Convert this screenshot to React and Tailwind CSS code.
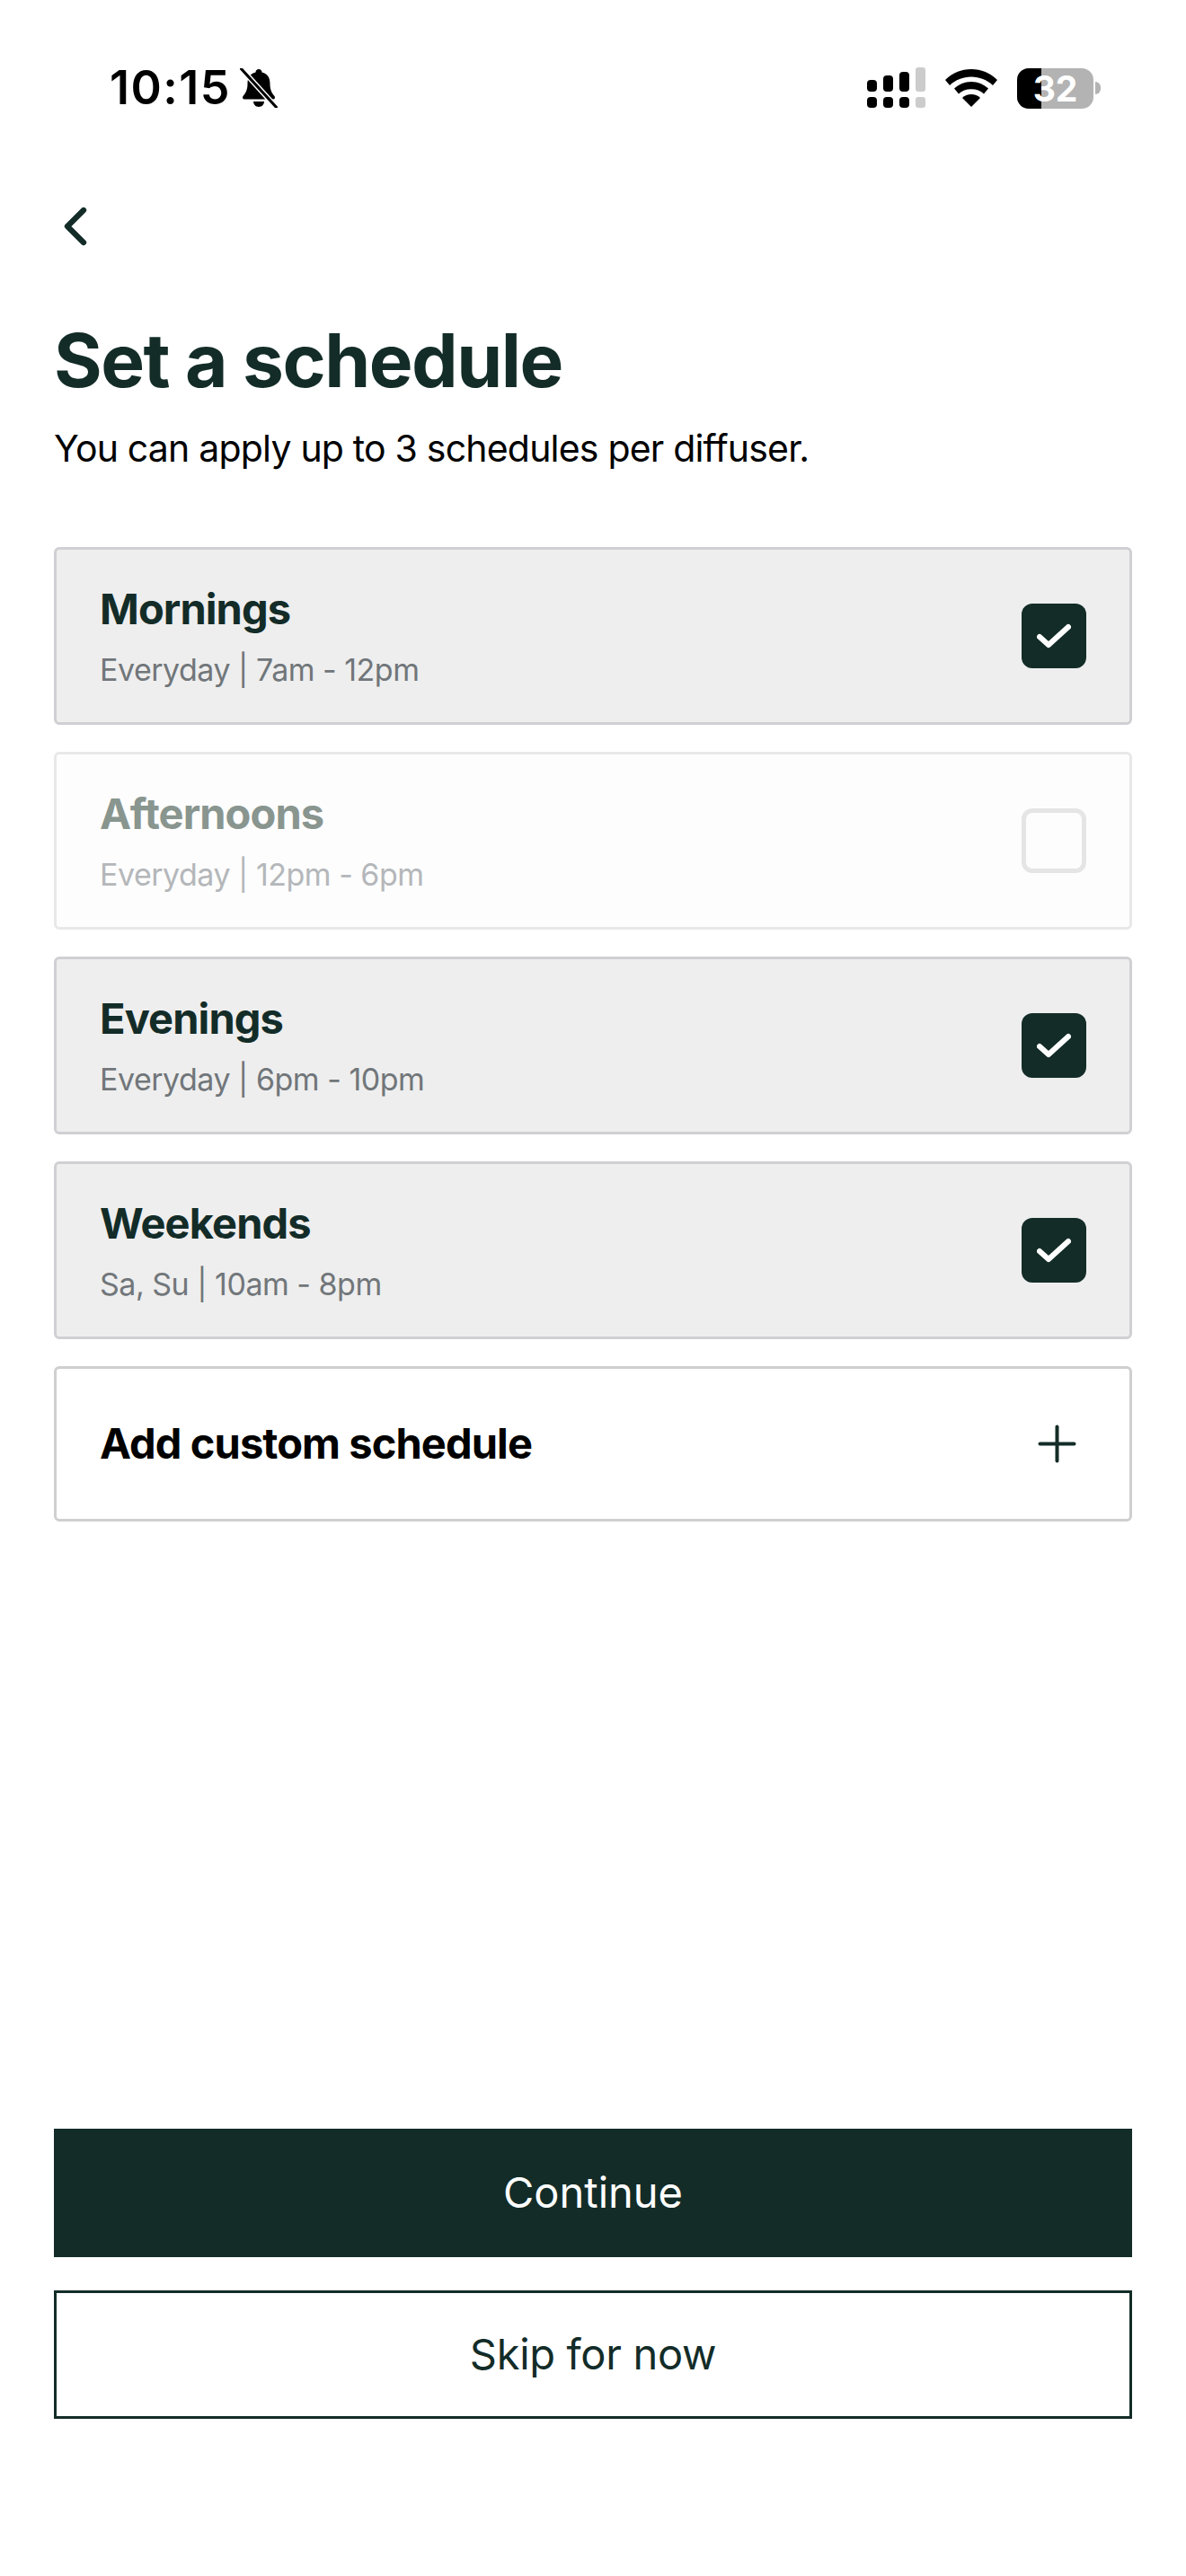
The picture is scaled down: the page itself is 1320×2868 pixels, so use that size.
import { ChevronLeft, Plus } from "lucide-react";

const schedules = [
  { name: "Mornings", detail: "Everyday | 7am - 12pm", checked: true },
  { name: "Afternoons", detail: "Everyday | 12pm - 6pm", checked: false },
  { name: "Evenings", detail: "Everyday | 6pm - 10pm", checked: true },
  { name: "Weekends", detail: "Sa, Su | 10am - 8pm", checked: true },
];

const SignalIcon = () => (
  <svg width="65" height="46" viewBox="0 0 65 46" fill="#000">
    <rect x="0" y="14" width="11" height="13" rx="4" />
    <rect x="18" y="9" width="11" height="18" rx="4" />
    <rect x="36" y="5" width="11" height="22" rx="4" />
    <rect x="54" y="0" width="11" height="27" rx="3" fill="#cccccc" />
    <rect x="0" y="33" width="11" height="12" rx="4" />
    <rect x="18" y="33" width="11" height="12" rx="4" />
    <rect x="36" y="33" width="11" height="12" rx="4" />
    <rect x="54" y="33" width="11" height="12" rx="3" fill="#cccccc" />
  </svg>
);

const WifiIcon = () => (
  <svg width="58" height="42" viewBox="0 0 58 42" fill="#000">
    <path d="M29 0C18 0 8 4 0 12l5 6c6.500-6 15-9.500 24-9.500S46.500 12 53 18l5-6C50 4 40 0 29 0Z" />
    <path d="M29 14c-7.500 0-14 3-19 7.500l5 6c3.500-3.300 8.500-5.200 14-5.200s10.500 1.900 14 5.200l5-6C43 17 36.500 14 29 14Z" />
    <path d="M29 28c-4 0-7.500 1.500-10 4l10 10 10-10c-2.500-2.500-6-4-10-4Z" />
  </svg>
);

const MutedBell = () => (
  <svg width="42" height="44" viewBox="0 0 42 44">
    <path
      d="M21 1c-2 0-3.500 1.500-3.500 3.500C11 6 8.500 11 8.500 17c0 6-1.500 10-5 14-1 1.500-.5 3.500 1.500 3.500h32c2 0 2.500-2 1.500-3.500-3.500-4-5-8-5-14 0-6-2.500-11-9-12.500C24.500 2.500 23 1 21 1Z"
      fill="#000"
    />
    <path d="M15 37h12c0 3-2.500 6-6 6s-6-3-6-6Z" fill="#000" />
    <path d="M2 1l38 42" stroke="#fff" strokeWidth="6" />
    <path d="M1 0l40 44" stroke="#000" strokeWidth="3" strokeLinecap="round" />
  </svg>
);

const Battery = () => (
  <div className="flex items-center gap-[2px]">
    <div className="relative flex h-[45px] w-[85px] items-center justify-center rounded-[13px] bg-[#b3b3b3]">
      <div className="absolute inset-y-0 left-0 w-[27px] rounded-l-[13px] bg-black" />
      <span className="relative text-[39px] leading-[45px] font-bold text-white">32</span>
    </div>
    <div className="h-[14px] w-[6px] rounded-r-full bg-[#b3b3b3]" />
  </div>
);

const Checkbox = ({ checked }) =>
  checked ? (
    <div className="flex h-[72px] w-[72px] items-center justify-center rounded-[12px] bg-[#132c28]">
      <svg width="38" height="28" viewBox="0 0 38 28" fill="none">
        <path d="M3 15l10 9L35 4" stroke="#fff" strokeWidth="6" strokeLinecap="round" strokeLinejoin="round" />
      </svg>
    </div>
  ) : (
    <div className="h-[72px] w-[72px] rounded-[12px] border-[5px] border-[#e5e5e5]" />
  );

const ScheduleCard = ({ schedule }) => {
  const { name, detail, checked } = schedule;
  return (
    <div
      className={`flex h-[198px] items-center justify-between rounded-[6px] border-[3px] px-[48px] ${
        checked ? "border-[#d0d0d4] bg-[#eeeeee]" : "border-[#e8e8e8] bg-[#fdfdfd]"
      }`}
    >
      <div>
        <div
          className={`text-[47px] leading-[62px] font-bold tracking-[-0.9px] ${
            checked ? "text-[#132c28]" : "text-[#89958f]"
          }`}
        >
          {name}
        </div>
        <div
          className={`mt-[14px] text-[34px] leading-[46px] tracking-[-0.5px] ${
            checked ? "text-[#71767a]" : "text-[#b4b7ba]"
          }`}
        >
          {detail}
        </div>
      </div>
      <Checkbox checked={checked} />
    </div>
  );
};

export default function App() {
  return (
    <div className="flex min-h-[2868px] flex-col bg-white px-[60px] font-['Inter',sans-serif] text-[#132c28]">
      {/* Status bar */}
      <div className="-mx-[60px] flex h-[129px] items-end justify-between pr-[95px] pl-[122px] text-black">
        <div className="flex items-center gap-[10px]">
          <span className="text-[52px] leading-[62px] font-semibold tracking-[1.5px]">10:15</span>
          <MutedBell />
        </div>
        <div className="flex items-center gap-[22px] pb-[8px]">
          <SignalIcon />
          <WifiIcon />
          <Battery />
        </div>
      </div>

      {/* Back */}
      <div className="mt-[87px] -ml-[12px]">
        <ChevronLeft size={72} strokeWidth={2.1} />
      </div>

      <h1 className="mt-[64px] text-[82px] leading-[100px] font-bold tracking-[-1.5px]">Set a schedule</h1>
      <p className="mt-[22px] text-[41px] leading-[50px] tracking-[-0.8px] text-black">
        You can apply up to 3 schedules per diffuser.
      </p>

      <div className="mt-[85px] flex flex-col gap-[30px]">
        {schedules.map((schedule) => (
          <ScheduleCard key={schedule.name} schedule={schedule} />
        ))}
        <div className="flex h-[173px] items-center justify-between rounded-[6px] border-[3px] border-[#cfcfcf] bg-white pr-[48px] pl-[48px]">
          <span className="text-[47px] font-bold tracking-[-0.9px] text-black">Add custom schedule</span>
          <Plus size={65} strokeWidth={1.48} />
        </div>
      </div>

      <div className="flex-1" />

      <button className="flex h-[143px] items-center justify-center bg-[#132c28] text-[47px] text-white">Continue</button>
      <button className="mt-[37px] mb-[175px] flex h-[143px] items-center justify-center border-[3px] border-[#132c28] text-[47px] tracking-[-0.3px]">
        Skip for now
      </button>
    </div>
  );
}
